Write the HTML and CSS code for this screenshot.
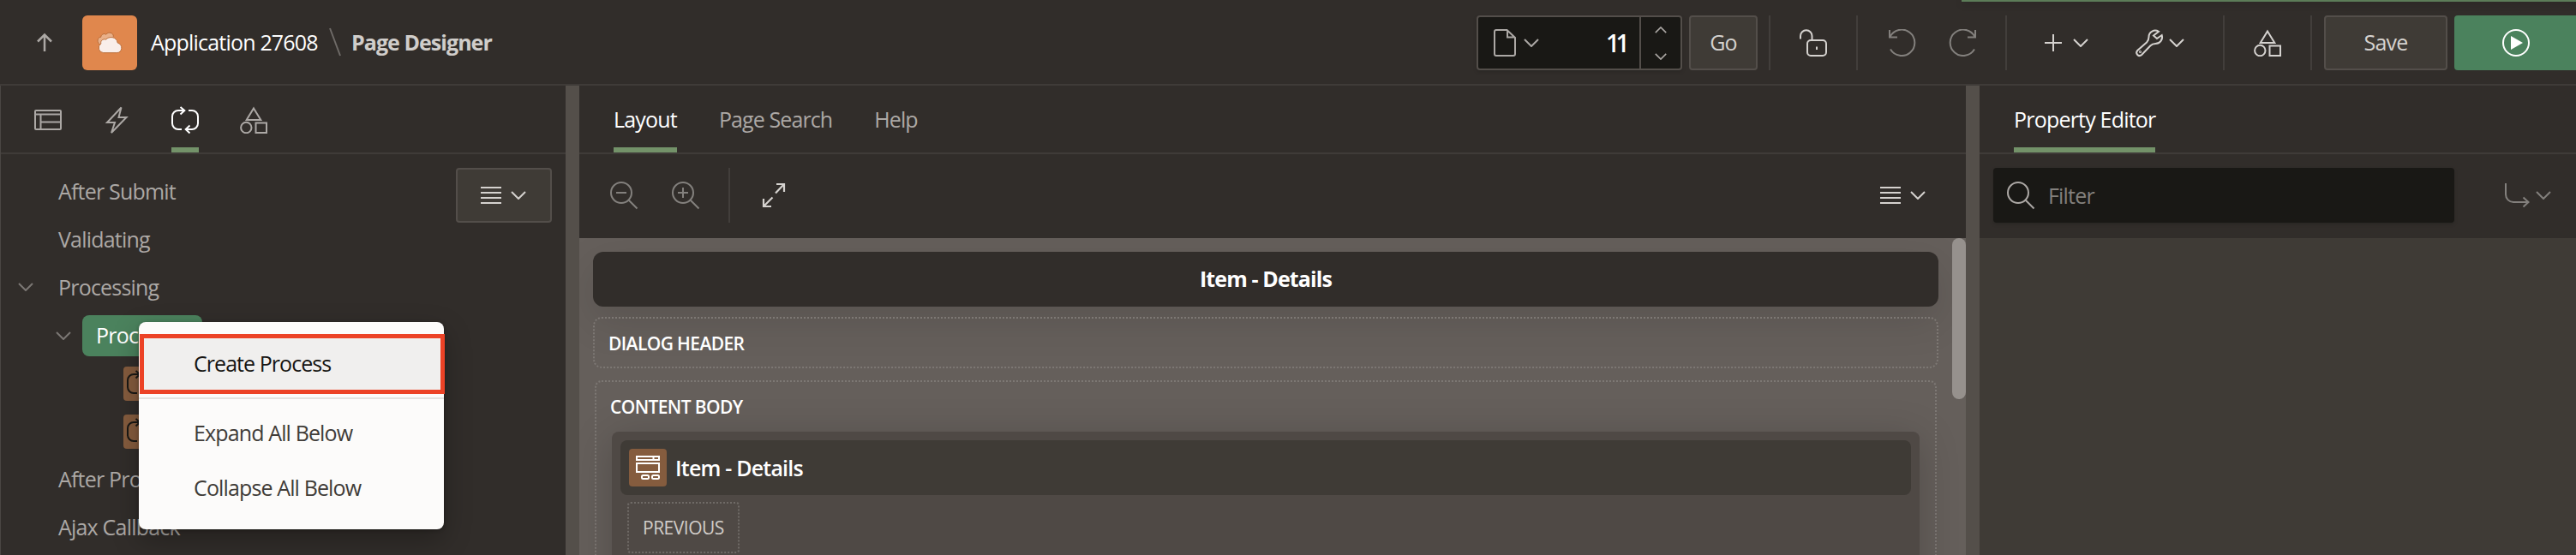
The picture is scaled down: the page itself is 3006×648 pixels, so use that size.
FILE: index.html
```html
<!DOCTYPE html>
<html lang="en">
<head>
<meta charset="utf-8">
<title>Page Designer</title>
<link rel="stylesheet" href="styles.css">
</head>
<body>
<svg class="defs" aria-hidden="true">
  <symbol id="chev" viewBox="0 0 18 10"><path d="M1 1l8 8 8-8"/></symbol>
  <symbol id="shapes" viewBox="0 0 32 32"><path d="M16 2.500l8.300 13.500H7.700zM18.500 19.500H31V31H18.500z"/><circle cx="7.300" cy="25" r="6.200"/></symbol>
  <symbol id="bars" viewBox="0 0 24 20"><path d="M0 1h24M0 7h24M0 13h24M0 19h24"/></symbol>
  <symbol id="process" viewBox="0 0 32 32"><path d="M12 27H8a7 7 0 0 1-7-7v-8a7 7 0 0 1 7-7h7M10.500 1l4.800 4-4.800 4.500M20 5h4a7 7 0 0 1 7 7v8a7 7 0 0 1-7 7h-7M21.500 22.500L16.700 27l4.800 4.500"/></symbol>
  <symbol id="undo" viewBox="0 0 32 32"><path d="M1 1v8.500h9M1.500 9A15.200 15.200 0 1 1 2 23.500"/></symbol>
</svg>

<header class="header">
  <svg class="up" viewBox="0 0 18 22"><path d="M9 21V2M1 9.500L9 1.500l8 8"/></svg>
  <div class="app-icon">
    <svg viewBox="0 0 32 26"><path class="cloud-back" d="M3 15C-1 10 2 6 5 6c0-3 4-5 6-3 3-4 9-2 9 2l-4 7-8 4z"/><path class="cloud-front" d="M8 25a6 6 0 0 1-3-11c-1-4 3-6 6-5 3-4 13-4 14 4 7 2 6 12-1 12z"/></svg>
  </div>
  <span class="app-name">Application 27608</span>
  <svg class="slash" viewBox="0 0 14 32"><path d="M1 0l12 32"/></svg>
  <span class="page-name">Page Designer</span>

  <div class="tools">
    <div class="page-field">
      <svg class="file" viewBox="0 0 26 32"><path d="M3 1h12.500l9.500 9v19a2 2 0 0 1-2 2H3a2 2 0 0 1-2-2V3a2 2 0 0 1 2-2zM16 1v8.500h9"/></svg>
      <svg class="chev"><use href="#chev"/></svg>
      <span class="page-no">11</span>
      <div class="spinner"><svg class="flip"><use href="#chev"/></svg><svg><use href="#chev"/></svg></div>
    </div>
    <div class="btn go">Go</div>
    <i class="sep s1"></i>
    <svg class="ic lock" viewBox="0 0 32 32"><rect x="9" y="13" width="22" height="18" rx="4"/><path d="M1 11.500V8a6.700 6.700 0 0 1 13.500 0v5M20 20.500v3.500"/></svg>
    <i class="sep s2"></i>
    <svg class="ic undo dim"><use href="#undo"/></svg>
    <svg class="ic redo dim"><use href="#undo"/></svg>
    <i class="sep s3"></i>
    <svg class="plus" viewBox="0 0 20 20"><path d="M10 0v20M0 10h20"/></svg>
    <svg class="chev c1"><use href="#chev"/></svg>
    <svg class="ic wrench" viewBox="0 0 32 32"><path d="M27 2.800C22 -.2 15.500 3 15.500 9c0 3-.5 4.500-2.500 6.500L2.200 25c-3 3.500 1.500 8 5 5l10-10.500c2-2 3.500-2.500 6-2.500 5.500 0 9-5 7.500-10l-5.700 4-4-3.500z"/><circle cx="5.500" cy="26.500" r=".5"/></svg>
    <svg class="chev c2"><use href="#chev"/></svg>
    <i class="sep s4"></i>
    <svg class="ic shapes"><use href="#shapes"/></svg>
    <i class="sep s5"></i>
    <div class="btn save">Save</div>
    <div class="run"><svg class="ic" viewBox="0 0 32 32"><circle cx="16" cy="16" r="15"/><path class="fill" d="M10 8l14 8-14 8z"/></svg></div>
  </div>
  <div class="notice"></div>
</header>

<main class="main">
  <section class="left">
    <nav class="tabs icon-tabs">
      <span class="tab"><svg class="ic" viewBox="0 0 32 32"><rect x="1" y="5" width="30" height="22" rx="1"/><path d="M1 9.500h30M7.500 9.500v17.500M7.500 18.500H31"/></svg></span>
      <span class="tab"><svg class="ic" viewBox="0 0 32 32"><path d="M21.500 1.500L5 19h9L10 31l17.500-18H18.500z"/></svg></span>
      <span class="tab on"><svg class="ic"><use href="#process"/></svg></span>
      <span class="tab"><svg class="ic"><use href="#shapes"/></svg></span>
    </nav>
    <div class="tree-wrap">
      <ul class="tree">
        <li>After Submit</li>
        <li>Validating</li>
        <li class="parent"><svg class="chev"><use href="#chev"/></svg>Processing</li>
        <li class="child"><svg class="chev"><use href="#chev"/></svg><span class="pill">Processes</span></li>
        <li class="leaf"><span class="chip"><svg class="ic"><use href="#process"/></svg></span></li>
        <li class="leaf"><span class="chip"><svg class="ic"><use href="#process"/></svg></span></li>
        <li>After Processing</li>
        <li>Ajax Callback</li>
      </ul>
      <div class="btn menu-btn"><svg class="bars"><use href="#bars"/></svg><svg class="chev"><use href="#chev"/></svg></div>
    </div>
    <div class="menu">
      <div class="item hot">Create Process</div>
      <div class="rule"></div>
      <div class="item first">Expand All Below</div>
      <div class="item">Collapse All Below</div>
    </div>
  </section>

  <div class="splitter"></div>

  <section class="center">
    <nav class="tabs text-tabs">
      <span class="tab on">Layout</span><span class="tab">Page Search</span><span class="tab">Help</span>
    </nav>
    <div class="toolbar">
      <svg class="ic dim" viewBox="0 0 32 32"><circle cx="13" cy="13" r="12"/><path d="M7 13h12M21.500 21.500L31.500 31.500"/></svg>
      <svg class="ic dim zin" viewBox="0 0 32 32"><circle cx="13" cy="13" r="12"/><path d="M7 13h12M13 7v12M21.500 21.500L31.500 31.500"/></svg>
      <i class="sep"></i>
      <svg class="expand" viewBox="0 0 26 28"><path d="M16 1h9v9M25 1L15 11.500M1 18v9h9M1 27l10.500-10.500"/></svg>
      <svg class="bars"><use href="#bars"/></svg><svg class="chev"><use href="#chev"/></svg>
    </div>
    <div class="canvas">
      <div class="page-bar">Item - Details</div>
      <div class="zone dialog">DIALOG HEADER</div>
      <div class="zone content">
        <div class="zone-title">CONTENT BODY</div>
        <div class="region">
          <div class="region-bar"><span class="region-icon"><svg viewBox="0 0 28 28"><rect x="1" y="1" width="26" height="4"/><path d="M20.500 1v4"/><rect x="1" y="9" width="26" height="10"/><rect x="7" y="23" width="8" height="4" rx="1.500"/><rect x="19" y="23" width="8" height="4" rx="1.500"/></svg></span>Item - Details</div>
          <div class="prev">PREVIOUS</div>
        </div>
      </div>
      <div class="scroll-thumb"></div>
    </div>
  </section>

  <div class="splitter"></div>

  <section class="right">
    <nav class="tabs text-tabs"><span class="tab on">Property Editor</span></nav>
    <div class="toolbar filter-bar">
      <div class="filter"><svg class="ic" viewBox="0 0 32 32"><circle cx="13" cy="13" r="12"/><path d="M21.500 21.500L31.500 31.500"/></svg>Filter</div>
      <svg class="goto" viewBox="0 0 30 30"><path d="M2 1v13a9 9 0 0 0 9 9h17M22.500 17.500L28.500 23l-6 5.500"/></svg>
      <svg class="chev"><use href="#chev"/></svg>
    </div>
  </section>
</main>
</body>
</html>
```

FILE: styles.css
```css
* { box-sizing: border-box; }
body {
  margin: 0; width: 3006px; height: 648px; overflow: hidden;
  background: #312d2a; color: #aca8a5;
  font: 25px/32px "Open Sans", "Noto Sans", sans-serif; letter-spacing: -.8px;
  display: flex; flex-direction: column;
}
.defs { position: absolute; width: 0; height: 0; }
svg { flex: none; fill: none; stroke: currentColor; stroke-width: 2; overflow: visible; display: block; }
.fill { fill: currentColor; stroke: none; }
.ic { width: 32px; height: 32px; }
.chev { width: 18px; height: 10px; }
.bars { width: 24px; height: 20px; }
.dim { color: #83807d; }
.sep { flex: none; width: 2px; height: 64px; background: #423e3b; }
.btn {
  height: 64px; border: 2px solid #534e4a; border-radius: 4px; background: #3f3b36;
  color: #d5d2cf; display: flex; align-items: center; justify-content: center; flex: none; padding-bottom: 2px;
}

.header {
  position: relative; flex: none; height: 100px; padding-left: 43px; border-bottom: 2px solid #3f3b38;
  display: flex; align-items: center; white-space: nowrap;
}
.up { width: 18px; height: 22px; stroke-width: 2.5; margin-top: 2px; margin-right: 35px; }
.app-icon {
  width: 64px; height: 64px; margin-top: 2px; border-radius: 6px; background: #e0874d;
  display: flex; align-items: center; justify-content: center;
}
.app-icon svg { width: 31px; height: 26px; stroke: #ba6c38; stroke-width: 1; }
.app-icon path { stroke-linejoin: round; }
.cloud-back { fill: #e9b089; }
.cloud-front { fill: #f9eeea; }
.app-name { color: #fff; margin-left: 16px; width: 208px; }
.slash { width: 14px; height: 32px; color: #6f6b68; margin-right: 12px; }
.page-name { color: #d0cdca; font-weight: 700; letter-spacing: -.95px; }

.tools { margin-left: auto; padding-top: 2px; display: flex; align-items: center; color: #d5d2cf; }
.page-field {
  width: 240px; height: 64px; border: 2px solid #534e4a; border-radius: 4px; background: #191815; color: #aca8a5;
  display: flex; align-items: center; padding-left: 18px; box-shadow: 0 2px 4px rgba(0,0,0,.15);
}
.file { width: 26px; height: 32px; margin-right: 9px; }
.page-no { margin-left: auto; margin-right: 16px; color: #fff; font-size: 28px; font-weight: 600; letter-spacing: -4.5px; }
.spinner { width: 48px; height: 60px; border-left: 2px solid #534e4a; display: flex; flex-direction: column; align-items: center; justify-content: center; gap: 23px; }
.spinner svg { width: 14px; height: 8px; }
.flip { transform: scaleY(-1); }
.go { width: 80px; margin-left: 8px; }
.s1 { margin-left: 13px; }
.lock { margin-left: 34px; }
.s2 { margin-left: 34px; }
.undo { margin-left: 36px; }
.redo { margin-left: 38px; transform: scaleX(-1); }
.s3 { margin-left: 34px; }
.plus { width: 20px; height: 20px; margin-left: 44px; }
.c1 { margin: 0 55px 0 13px; }
.c2 { margin: 0 45px 0 7px; }
.shapes { margin: 0 34px; }
.save { width: 144px; margin-left: 14px; }
.run { width: 142px; height: 64px; margin-left: 8px; background: #4b825d; border-radius: 4px 0 0 4px; color: #fff; display: flex; align-items: center; padding-left: 56px; }
.notice { position: absolute; top: 0; right: 0; width: 717px; height: 2px; background: #5c7c58; box-shadow: 0 2px 8px rgba(0,0,0,.3); }

.main { flex: 1; min-height: 0; display: flex; }
.splitter { flex: none; width: 16px; background: #544f4a; }
.tabs { flex: none; height: 80px; border-bottom: 2px solid #3f3b38; display: flex; }
.tab { height: 78px; display: flex; align-items: center; border-bottom: 6px solid transparent; padding-top: 6px; white-space: nowrap; }
.tab.on { color: #fff; border-bottom-color: #739269; }
.icon-tabs { padding-left: 39px; gap: 48px; }
.icon-tabs .tab { padding-top: 8px; }

.left { position: relative; flex: none; width: 660px; border-left: 1px solid #4a4643; }
.tree-wrap { display: flex; justify-content: space-between; padding: 16px 16px 0 0; }
.tree { list-style: none; margin: 0; padding: 0; }
.tree li { height: 56px; padding: 0 0 2px 67px; display: flex; align-items: center; white-space: nowrap; }
.tree .parent { padding-left: 20px; }
.tree .parent .chev { margin-right: 29px; color: #7b7774; }
.tree .child { padding-left: 64px; padding-bottom: 0; }
.tree .child .chev { margin-right: 13px; color: #7b7774; }
.pill { height: 48px; width: 140px; padding: 7px 0 0 16px; border-radius: 8px; background: #4b825d; color: #fff; }
.tree .leaf { padding: 0 0 0 143px; }
.chip { width: 40px; height: 40px; border-radius: 4px; background: #855c3e; color: #191815; display: flex; align-items: center; padding-left: 4px; }
.menu-btn { width: 112px; gap: 11px; padding: 0 1px 0 0; }

.menu {
  position: absolute; z-index: 2; left: 161px; top: 276px; width: 356px; height: 242px;
  padding-top: 14px; background: #fcfbfa; border-radius: 8px; color: #403c38; letter-spacing: -.87px;
  box-shadow: 0 12px 32px rgba(0,0,0,.28), 0 1px 4px rgba(0,0,0,.3);
}
.item { height: 64px; padding: 15px 0 0 64px; white-space: nowrap; }
.item.hot { width: 356px; height: 70px; margin-left: 1px; border: 5px solid #ec4226; background: #f0efee; color: #161513; padding: 13px 0 0 58px; letter-spacing: -.95px; }
.rule { height: 2px; margin-top: 4px; background: #e4e2e0; }
.item.first { margin-top: 8px; }

.center { flex: none; width: 1618px; display: flex; flex-direction: column; }
.text-tabs { padding-left: 40px; gap: 49px; }
.text-tabs .tab:not(.on) { letter-spacing: -.9px; }
.toolbar { flex: none; height: 98px; padding: 16px 47px 18px 36px; display: flex; align-items: center; color: #d5d2cf; }
.zin { margin: 0 34px 0 40px; }
.expand { width: 26px; height: 28px; margin-left: 38px; margin-right: auto; stroke-width: 2.2; }
.toolbar .chev { margin-left: 11px; }
.canvas { position: relative; flex: 1; min-height: 0; overflow: hidden; background: #655f5b; padding: 16px 32px 0 16px; }
.page-bar {
  height: 64px; border-radius: 12px; background: #312d2a; color: #fff; font-weight: 700; letter-spacing: -.87px;
  display: flex; align-items: center; justify-content: center; padding-bottom: 2px; box-shadow: 0 16px 48px rgba(0,0,0,.12);
}
.zone { border: 2px dotted #7d7874; color: #fff; font-size: 21px; font-weight: 600; letter-spacing: -.6px; }
.dialog { height: 60px; margin-top: 12px; border-radius: 10px; padding: 13px 0 0 16px; }
.content { margin: 14px 2px 0; height: 300px; border-radius: 8px; padding: 13px 18px 0; }
.zone-title { height: 45px; margin-left: -2px; }
.region { height: 260px; border-radius: 8px; background: #4f4945; padding: 10px 10px 0; box-shadow: 0 8px 48px rgba(0,0,0,.2); }
.region-bar { height: 64px; border-radius: 8px; background: #3f3b36; font-size: 25px; letter-spacing: -.8px; display: flex; align-items: center; padding: 0 0 0 10px; }
.region-icon { width: 44px; height: 44px; margin-right: 10px; border-radius: 4px; background: #855c3e; display: flex; align-items: center; justify-content: center; }
.region-icon svg { width: 28px; height: 28px; }
.prev { width: 131px; height: 60px; margin: 8px 0 0 8px; border: 2px dotted #6f6a66; border-radius: 4px; color: #d1cdc9; font-weight: 400; letter-spacing: -.5px; padding: 12px 0 0 16px; }
.scroll-thumb { position: absolute; right: 0; top: 0; width: 16px; height: 188px; border-radius: 8px; background: #96918d; }

.right { flex: 1; background: #3f3b36; }
.right .tabs, .right .toolbar { background: #312d2a; }
.filter-bar { padding: 16px 29px 18px 16px; color: #83807d; }
.filter { width: 538px; height: 64px; padding-left: 16px; margin-right: auto; border-radius: 4px; background: #191815; display: flex; align-items: center; gap: 16px; box-shadow: 0 2px 4px rgba(0,0,0,.15); }
.filter .ic { color: #aca8a5; }
.goto { width: 30px; height: 30px; }
.filter-bar .chev { margin-left: 7px; }
```
